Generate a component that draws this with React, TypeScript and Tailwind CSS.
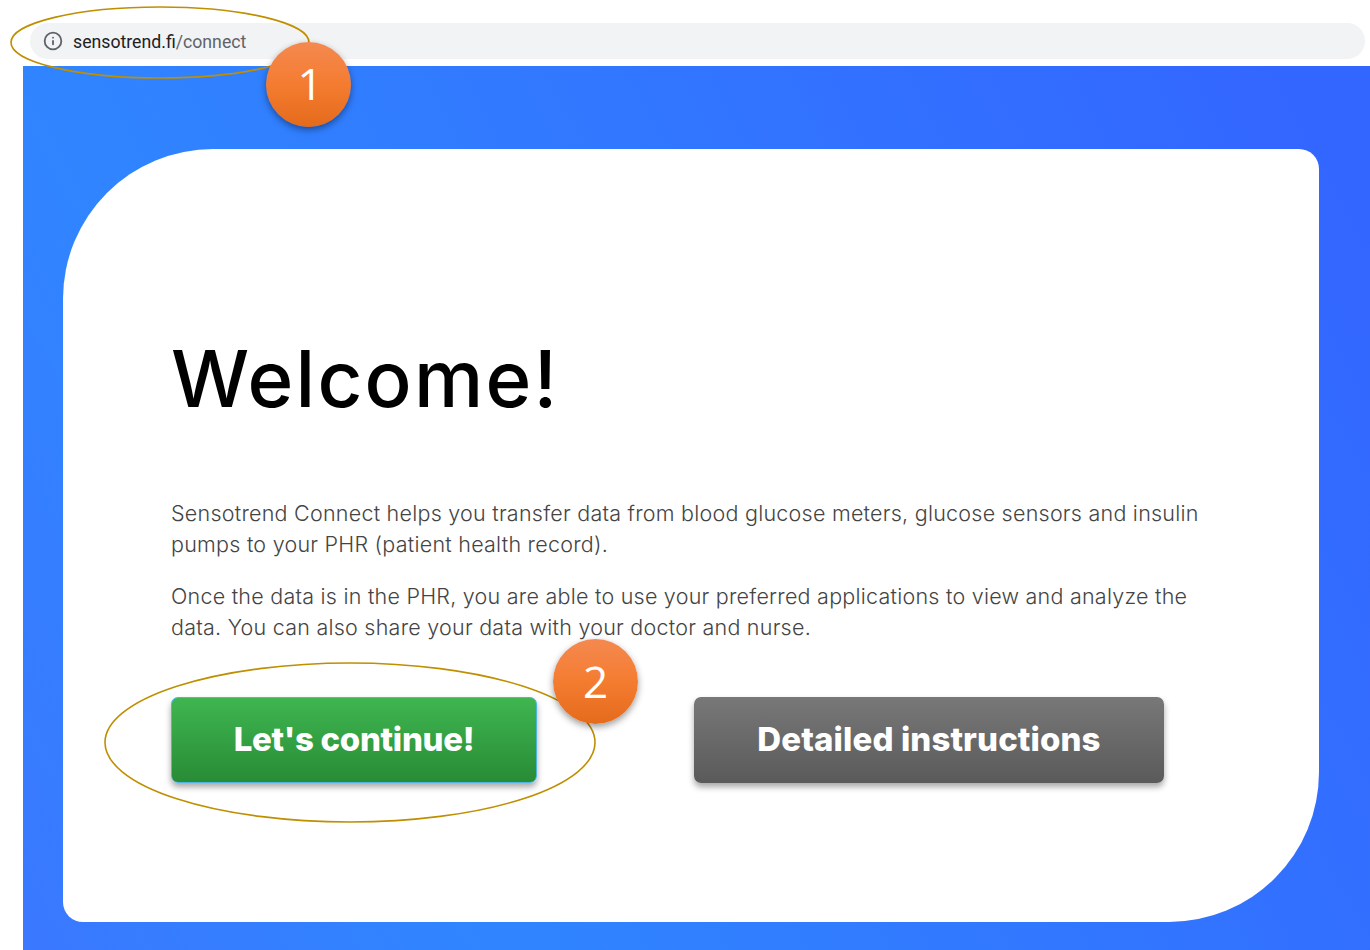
import { Info } from "lucide-react"

function Badge({ n, className }: { n: number; className: string }) {
  return (
    <div
      className={`absolute flex h-[85px] w-[85px] items-center justify-center rounded-full bg-gradient-to-b from-[#f4894f] via-[#f47c30] to-[#e56b1b] font-['Open_Sans',sans-serif] text-[44px] leading-none text-white shadow-[0_3px_7px_rgba(0,0,0,0.4)] ${className}`}
    >
      {n}
    </div>
  )
}

function Ring({ className, w, h }: { className: string; w: number; h: number }) {
  return (
    <svg className={`pointer-events-none absolute ${className}`} width={w} height={h} viewBox={`0 0 ${w} ${h}`} fill="none">
      <ellipse cx={w / 2} cy={h / 2} rx={w / 2 - 1} ry={h / 2 - 1} stroke="#bf8f00" strokeWidth="1.6" />
    </svg>
  )
}

export default function App() {
  return (
    <div className="relative flex h-[950px] w-[1370px] flex-col overflow-hidden bg-white font-['Inter',sans-serif]">
      {/* Address bar */}
      <div className="h-[66px] pl-[30px] pr-[5px] pt-[23px]">
        <div className="flex h-[36px] items-center rounded-full bg-[#f1f3f4] pl-[13px]">
          <Info className="h-[20px] w-[20px] text-[#5f6368]" strokeWidth={2.2} />
          <span className="ml-[10px] pt-[2px] font-['Roboto',sans-serif] text-[17.7px] text-[#202124]">
            sensotrend.fi<span className="text-[#5f6368]">/connect</span>
          </span>
        </div>
      </div>

      {/* Page */}
      <div className="ml-[23px] flex-1 bg-[linear-gradient(62deg,#3a78ff_0%,#3085ff_26%,#3366ff_95%)] pb-[28px] pl-[41px] pr-[51px] pt-[83px]">
        <div className="-ml-px h-[773px] rounded-bl-[20px] rounded-br-[150px] rounded-tl-[150px] rounded-tr-[20px] bg-white pl-[108px] pt-[186px]">
          <h1 className="text-[78px] font-medium leading-[88px] tracking-[2.2px] text-black">Welcome!</h1>

          <p className="mt-[75px] w-[1060px] text-[21.5px] font-light leading-[31px] tracking-[0.24px] text-[#444444]">
            Sensotrend Connect helps you transfer data from blood glucose meters, glucose sensors and insulin
            <br />
            pumps to your PHR (patient health record).
          </p>
          <p className="mt-[21px] w-[1060px] text-[21.5px] font-light leading-[31px] tracking-[0.24px] text-[#444444]">
            Once the data is in the PHR, you are able to use your preferred applications to view and analyze the
            <br />
            data. You can also share your data with your doctor and nurse.
          </p>

          <div className="mt-[54px] flex">
            <button className="h-[86px] w-[366px] rounded-[7px] border border-[#4db5e0] bg-gradient-to-b from-[#3fb650] to-[#288c36] text-[33px] font-extrabold tracking-[-0.3px] text-white shadow-[0_4px_6px_rgba(0,0,0,0.35)]">
              Let's continue!
            </button>
            <button className="ml-[157px] h-[86px] w-[470px] rounded-[7px] bg-gradient-to-b from-[#787878] to-[#5a5a5a] text-[33px] font-extrabold tracking-[0.1px] text-white shadow-[0_4px_6px_rgba(0,0,0,0.35)]">
              Detailed instructions
            </button>
          </div>
        </div>
      </div>

      {/* Callouts drawn over the page */}
      <Ring className="left-[10px] top-[6px]" w={300} h={73} />
      <Ring className="left-[104px] top-[662px]" w={492} h={161} />
      <Badge n={1} className="left-[266px] top-[42px] pb-[3px] pl-[3px]" />
      <Badge n={2} className="left-[553px] top-[639px] pb-[2px]" />
    </div>
  )
}
